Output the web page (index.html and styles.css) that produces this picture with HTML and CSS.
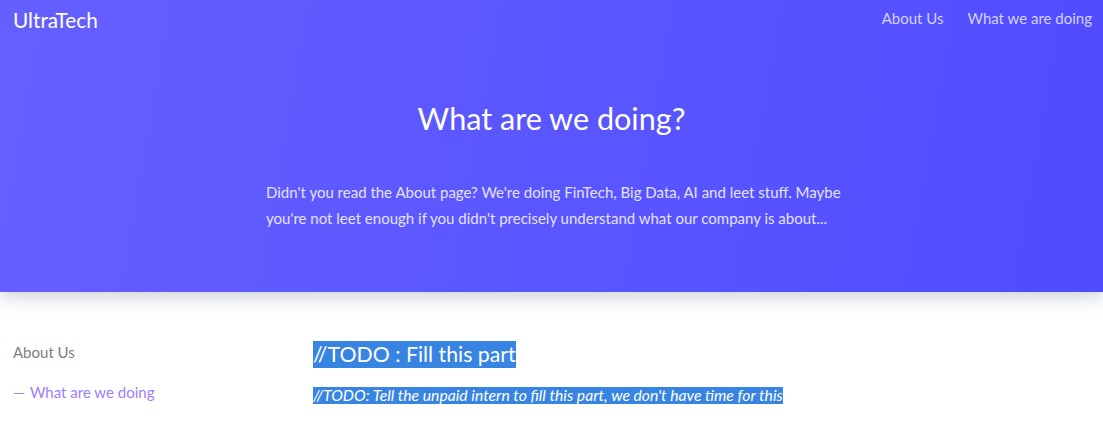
FILE: index.html
```html
<!DOCTYPE html>
<html>
<head>
<meta charset="utf-8">
<link rel="stylesheet" href="styles.css">
</head>
<body>
<header class="hero">
  <nav class="navbar">
    <a class="brand" href="#">UltraTech</a>
    <div class="nav-links">
      <a href="#">About Us</a>
      <a href="#">What we are doing</a>
    </div>
  </nav>
  <div class="hero-body">
    <h1 class="hero-title">What are we doing?</h1>
    <p class="hero-text">Didn't you read the About page? We're doing FinTech, Big Data, AI and leet stuff. Maybe you're not leet enough if you didn't precisely understand what our company is about...</p>
  </div>
</header>
<main class="content">
  <aside class="sidebar">
    <a class="side-link" href="#">About Us</a>
    <a class="side-link active" href="#"><span class="dash">—</span>What are we doing</a>
  </aside>
  <section class="article">
    <h2 class="article-title"><span class="sel">//TODO : Fill this part</span></h2>
    <p class="article-note"><span class="sel">//TODO: Tell the unpaid intern to fill this part, we don't have time for this</span></p>
  </section>
</main>
</body>
</html>
```

FILE: styles.css
```css
* { box-sizing: border-box; }
html, body { margin: 0; padding: 0; background: #fff; }
body { font-family: Lato, "Open Sans", sans-serif; color: #333; }
a { text-decoration: none; }

.hero {
  height: 292px;
  background: linear-gradient(100deg, #665fff 0%, #5a56ff 50%, #504cff 100%);
  box-shadow: 0 4px 18px rgba(60, 80, 110, 0.28);
  position: relative;
  z-index: 1;
}
.navbar {
  display: flex;
  justify-content: space-between;
  align-items: flex-start;
  padding: 7px 11px 0 13px;
  height: 40px;
}
.brand { color: #fff; font-size: 20.8px; line-height: 26px; }
.nav-links { display: flex; gap: 24px; padding-top: 1px; }
.nav-links a { color: #d4d2ff; font-size: 15px; line-height: 20px; }

.hero-body { display: flex; flex-direction: column; }
.hero-title {
  margin: 59px 0 0;
  text-align: center;
  font-weight: 400;
  font-size: 30.6px;
  line-height: 40px;
  color: #fff;
}
.hero-text {
  max-width: 580px;
  margin: 40px 0 0 266px;
  font-size: 15px;
  line-height: 26px;
  color: #e4e2ff;
}

.content { display: flex; padding: 49px 13px 0; }
.sidebar { width: 300px; display: flex; flex-direction: column; gap: 20px; padding-top: 1px; }
.side-link { font-size: 15px; line-height: 20px; color: #7d7d7d; }
.side-link.active { color: #9b80ff; }
.dash { margin-right: 5px; }
.article { display: flex; flex-direction: column; align-items: flex-start; }
.article-title { margin: 0; font-weight: 400; font-size: 21.3px; line-height: 27px; }
.article-note { margin: 19px 0 0; font-style: italic; font-size: 15.7px; line-height: 17px; }
.sel { display: inline-block; background: #3884e2; color: #fff; }
```
